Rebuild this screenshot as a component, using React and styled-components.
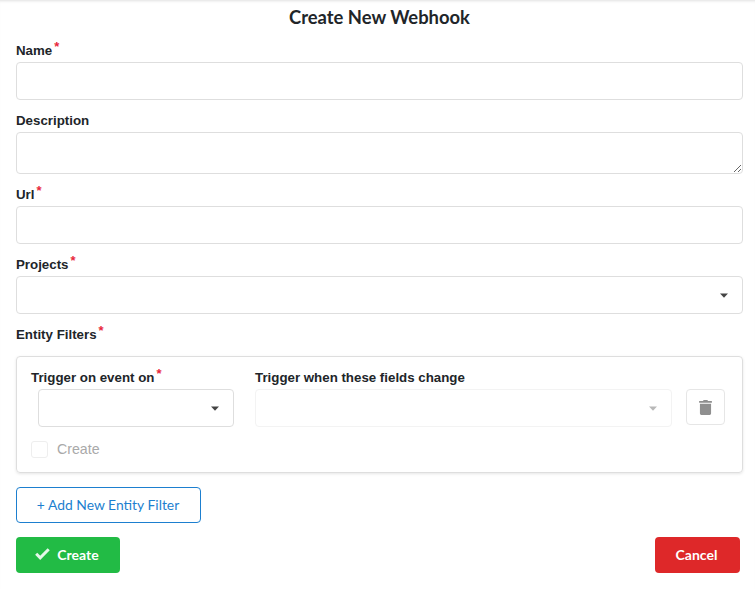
import styled, { createGlobalStyle } from 'styled-components'

const GlobalStyle = createGlobalStyle`
    * {
        box-sizing: border-box;
    }

    body {
        margin: 0;
        background: #fff;
        font-family: "Liberation Sans", Arial, sans-serif;
        color: #212529;
    }
`

const Caret = ({ muted }) => (
    <CaretIcon viewBox="0 0 8 5" $muted={muted}>
        <path d="M0 0.4h8L4 4.8z" />
    </CaretIcon>
)

const Field = ({ label, required, children }) => (
    <div>
        <LabelRow>
            <Label>{label}</Label>
            {required && <Star>*</Star>}
        </LabelRow>
        {children}
    </div>
)

const App = () => {
    return (
        <Page>
            <GlobalStyle />
            <Title>Create New Webhook</Title>

            <Field label="Name" required>
                <Input />
            </Field>
            <Field label="Description">
                <TextArea />
            </Field>
            <Field label="Url" required>
                <Input />
            </Field>
            <Field label="Projects" required>
                <Select>
                    <Caret />
                </Select>
            </Field>
            <Field label="Entity Filters" required />

            <FilterCard>
                <FilterRow>
                    <div>
                        <CardLabelRow>
                            <Label>Trigger on event on</Label>
                            <Star>*</Star>
                        </CardLabelRow>
                        <EventSelect>
                            <Caret />
                        </EventSelect>
                    </div>
                    <div>
                        <CardLabelRow>
                            <Label>Trigger when these fields change</Label>
                        </CardLabelRow>
                        <FieldsSelect>
                            <Caret muted />
                        </FieldsSelect>
                    </div>
                    <DeleteButton>
                        <svg width="13" height="15" viewBox="0 0 448 512" fill="#8f8f8f" preserveAspectRatio="none">
                            <path d="M32 464a48 48 0 0 0 48 48h288a48 48 0 0 0 48-48V128H32zM432 32H312l-9.400-18.700A24 24 0 0 0 281.100 0H166.800a23.700 23.700 0 0 0-21.400 13.300L136 32H16A16 16 0 0 0 0 48v32a16 16 0 0 0 16 16h416a16 16 0 0 0 16-16V48a16 16 0 0 0-16-16z" />
                        </svg>
                    </DeleteButton>
                </FilterRow>
                <CheckRow>
                    <CheckBox />
                    <CheckLabel>Create</CheckLabel>
                </CheckRow>
            </FilterCard>

            <AddButton>+ Add New Entity Filter</AddButton>

            <Footer>
                <SolidButton $color="#22bb45" $width="104px">
                    <svg width="15" height="12" viewBox="0 0 15 12" fill="none" stroke="#e4f7e9" strokeWidth="3">
                        <path d="M1.200 5.800l4 4 8.500-8.500" />
                    </svg>
                    Create
                </SolidButton>
                <SolidButton $color="#de2829" $width="85px">Cancel</SolidButton>
            </Footer>
        </Page>
    )
}

export default App

const Page = styled.div`
    width: 755px;
    height: 589px;
    padding: 0 12px 0 16px;
    overflow: hidden;
    box-shadow: inset 0 3px 3px -2px rgba(0, 0, 0, 0.12);
`

const Title = styled.h1`
    margin: 0;
    height: 38px;
    padding-top: 5px;
    font: 700 18.4px/24px Lato, sans-serif;
    text-align: center;
    color: #212529;
`

const LabelRow = styled.div`
    display: flex;
    align-items: center;
    height: 24px;
`

const Label = styled.label`
    font-size: 13.3px;
    font-weight: 700;
    color: #212529;
`

const Star = styled.span`
    position: relative;
    top: -4px;
    margin-left: 2px;
    font-size: 13px;
    font-weight: 700;
    line-height: 1;
    color: #e8283c;
`

const Input = styled.input`
    display: block;
    width: 727px;
    height: 38px;
    margin-bottom: 8px;
    border: 1px solid #dedede;
    border-radius: 4px;
    background: #fff;
    outline: 0;
`

const TextArea = styled.textarea`
    display: block;
    width: 727px;
    height: 42px;
    margin: 0 0 8px;
    border: 1px solid #dedede;
    border-radius: 4px;
    background: #fff;
    outline: 0;
`

const Select = styled.div`
    display: flex;
    align-items: center;
    justify-content: flex-end;
    width: 100%;
    height: 38px;
    margin-bottom: 8px;
    padding-right: 14px;
    border: 1px solid #dedede;
    border-radius: 4px;
    background: #fff;
`

const EventSelect = styled(Select)`
    width: 196px;
    margin: 0 0 0 7px;
`

const FieldsSelect = styled(Select)`
    margin: 0;
    border-color: #f3f3f3;
`

const CaretIcon = styled.svg`
    width: 8px;
    height: 5px;
    fill: ${p => (p.$muted ? '#b8b8b8' : '#444')};
`

const FilterCard = styled.div`
    width: 727px;
    height: 117px;
    margin-top: 10px;
    padding: 9px 17px 0 14px;
    border: 1px solid #dedede;
    border-radius: 4px;
    box-shadow: 0 1px 3px rgba(0, 0, 0, 0.1);
`

const FilterRow = styled.div`
    display: grid;
    grid-template-columns: 203px 417px 39px;
    column-gap: 21px;
    align-items: start;

    > :last-child {
        margin-left: -7px;
    }
`

const CardLabelRow = styled(LabelRow)`
    height: 23px;
`

const DeleteButton = styled.button`
    display: flex;
    align-items: center;
    justify-content: center;
    width: 39px;
    height: 36px;
    margin-top: 23px;
    padding: 0 1px 0 0;
    border: 1px solid #e6e6e6;
    border-radius: 4px;
    background: #fff;
`

const CheckRow = styled.div`
    display: flex;
    align-items: center;
    gap: 9px;
    margin-top: 14px;
`

const CheckBox = styled.span`
    width: 17px;
    height: 17px;
    border: 1px solid #eeeeee;
    border-radius: 3px;
`

const CheckLabel = styled.span`
    position: relative;
    top: -1px;
    font-size: 14.2px;
    color: #a9a9a9;
`

const AddButton = styled.button`
    display: block;
    width: 185px;
    height: 36px;
    margin-top: 14px;
    padding: 0 1px 2px 0;
    border: 1px solid #1d7fcf;
    border-radius: 4px;
    background: #fff;
    font: 400 13.9px Lato, sans-serif;
    color: #1d7fcf;
`

const Footer = styled.div`
    display: flex;
    justify-content: space-between;
    width: 724px;
    margin-top: 14px;
`

const SolidButton = styled.button`
    display: flex;
    align-items: center;
    justify-content: center;
    gap: 7px;
    width: ${p => p.$width};
    height: 36px;
    padding: 0 2px 2px 0;
    border: 0;
    border-radius: 4px;
    background: ${p => p.$color};
    font: 700 14px Lato, sans-serif;
    color: #fff;
`
